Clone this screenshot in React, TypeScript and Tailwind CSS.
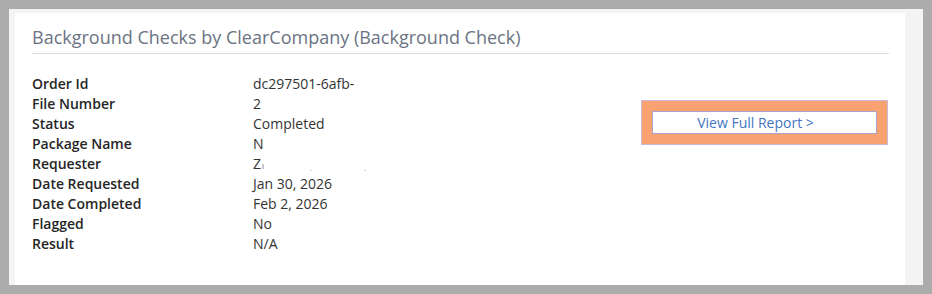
export default function App() {
  const rows = [
    { label: 'Order Id', value: 'dc297501-6afb-' },
    { label: 'File Number', value: '2' },
    { label: 'Status', value: 'Completed' },
    { label: 'Package Name', value: 'N' },
    { label: 'Requester', value: 'Z' },
    { label: 'Date Requested', value: 'Jan 30, 2026' },
    { label: 'Date Completed', value: 'Feb 2, 2026' },
    { label: 'Flagged', value: 'No' },
    { label: 'Result', value: 'N/A' },
  ];

  return (
    <div className="w-[932px] h-[294px] bg-[#acacac] pt-[9px] pl-[9px] font-['Open_Sans',sans-serif]">
      <div className="w-[914px] h-[276px] bg-[#f4f4f4] pt-[4px] pl-[6px] pr-[18px]">
        <div className="h-full bg-white pl-[17px] pr-[16px] pt-[11px]">
          <h2 className="text-[18px] leading-[26px] text-[#6b7483] pb-[3px] border-b border-[#dcdcdc]">
            Background Checks by ClearCompany (Background Check)
          </h2>

          <div className="flex justify-between mt-[20px]">
            <div>
              {rows.map((row, index) => (
                <div key={index} className="flex text-[14px] leading-[20px]">
                  <div className="w-[221px] font-semibold text-[#262626]">{row.label}</div>
                  <div className="text-[#333333] flex items-center">
                    {row.value}
                    {row.label === 'Requester' && (
                      <>
                        <span className="inline-block w-[2px] h-[5px] bg-[#c8c8c8] ml-[1px] mt-[4px]"></span>
                        <span className="inline-block w-[2px] h-[1px] bg-[#d6d6d6] ml-[46px] mt-[12px]"></span>
                        <span className="inline-block w-[2px] h-[1px] bg-[#d6d6d6] ml-[52px] mt-[12px]"></span>
                      </>
                    )}
                  </div>
                </div>
              ))}
            </div>

            <div className="mt-[26px] mr-[1px]">
              <div className="w-[247px] h-[45px] bg-[#f9a271] border border-[#c9b8d8] p-[10px]">
                <a className="block h-[23px] bg-white border border-[#a8a2cc] text-center pr-[18px] text-[14px] leading-[21px] text-[#4576c2]">
                  View Full Report &gt;
                </a>
              </div>
            </div>
          </div>
        </div>
      </div>
    </div>
  );
}
